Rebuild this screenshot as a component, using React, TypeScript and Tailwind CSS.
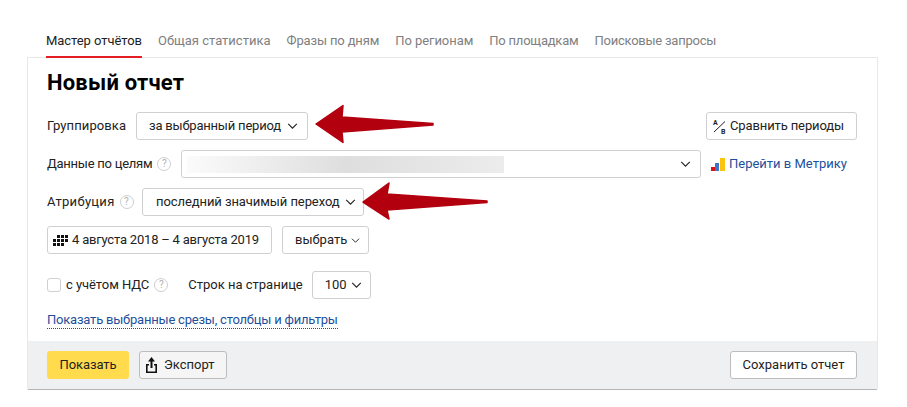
const Chevron = ({ className = "w-[11px] h-[6px]" }: { className?: string }) => (
  <svg viewBox="0 0 12 7" className={className} fill="none" stroke="#222" strokeWidth="1.3">
    <path d="M1 1l5 5 5-5" />
  </svg>
);

const Hint = () => (
  <span className="inline-flex items-center justify-center w-[14px] h-[14px] rounded-full border border-[#cfcfcf] text-[#b0b0b0] text-[10px] leading-none">
    ?
  </span>
);

const btn = "h-[28px] flex items-center rounded-[3px] border border-[#d0d0d0] bg-white text-[13px] text-[#222]";

const App = () => {
  return (
    <div className="relative w-[907px] h-[407px] bg-white overflow-hidden font-['Roboto',sans-serif] text-[13px] text-[#222]">
      <div className="flex gap-[16px] pl-[46px] pt-[31px] h-[57px]">
        <div className="h-[27px] border-b-2 border-[#e31f24] leading-[19px] tracking-[-0.05px]">Мастер отчётов</div>
        <div className="leading-[19px] text-[#808080]">Общая статистика</div>
        <div className="leading-[19px] text-[#808080] tracking-[-0.15px]">Фразы по дням</div>
        <div className="leading-[19px] text-[#808080] tracking-[-0.05px]">По регионам</div>
        <div className="leading-[19px] text-[#808080] tracking-[-0.22px]">По площадкам</div>
        <div className="leading-[19px] text-[#808080] tracking-[-0.24px]">Поисковые запросы</div>
      </div>

      <div className="mx-[27px] w-[851px] h-[333px] border border-[#e8e8e8] border-b-[#b5b5b5] rounded-b-[2px] flex flex-col">
        <div className="flex-1 px-[19px]">
          <h1 className="text-[22px] font-bold leading-[28px] text-black tracking-[0.2px] mt-[11px] mb-[15px]">Новый отчет</h1>

          <div className="flex items-center">
            <span className="w-[89px] tracking-[0.1px]">Группировка</span>
            <div className={`${btn} w-[172px] pl-[12px] gap-[6px] tracking-[-0.2px]`}>за выбранный период <Chevron /></div>
            <div className={`${btn} ml-auto mr-[1px] w-[151px] pl-[6px] gap-[3px] tracking-[-0.12px]`}>
              <svg viewBox="0 0 14 15" className="w-[14px] h-[15px]">
                <path d="M1 13L12 2.5" stroke="#222" strokeWidth="1" />
                <text x="0" y="6" fontSize="7" fontWeight="700" fill="#222">A</text>
                <text x="8" y="14.5" fontSize="7" fontWeight="700" fill="#222">B</text>
              </svg>
              Сравнить периоды
            </div>
          </div>

          <div className="flex items-center mt-[10px]">
            <span className="w-[134px] flex items-center gap-[5px] tracking-[-0.25px]">Данные по целям <Hint /></span>
            <div className={`${btn} w-[520px] pl-[5px] pr-[9px] justify-between`}>
              <div className="w-[317px] h-[17px] bg-gradient-to-r from-[#fbfbfb] via-[#dedede] to-[#ececec]" />
              <Chevron />
            </div>
            <div className="flex items-center ml-[10px] gap-[4px]">
              <svg viewBox="0 0 14 13" className="w-[14px] h-[13px]">
                <rect x="0" y="9" width="4" height="4" fill="#d8141b" />
                <rect x="4" y="5" width="4" height="8" fill="#3f75c4" />
                <rect x="9" y="0" width="5" height="13" fill="#fcc40f" />
              </svg>
              <span className="text-[#1d4f9c]">Перейти в Метрику</span>
            </div>
          </div>

          <div className="flex items-center mt-[10px]">
            <span className="w-[95px] flex items-center gap-[5px] tracking-[0.3px]">Атрибуция <Hint /></span>
            <div className={`${btn} w-[222px] pl-[13px] gap-[5px] tracking-[-0.08px]`}>последний значимый переход <Chevron /></div>
          </div>

          <div className="flex items-center mt-[10px] gap-[10px]">
            <div className={`${btn} w-[225px] pl-[5px] gap-[4px] tracking-[-0.2px]`}>
              <svg viewBox="0 0 15 11" className="w-[15px] h-[11px]" fill="#111">
                <path d="M4 0h3v3H4zM8 0h3v3H8zM12 0h3v3h-3zM0 4h3v3H0zM4 4h3v3H4zM8 4h3v3H8zM12 4h3v3h-3zM0 8h3v3H0zM4 8h3v3H4zM8 8h3v3H8z" />
              </svg>
              4 августа 2018 – 4 августа 2019
            </div>
            <div className={`${btn} w-[87px] pl-[12px] gap-[4px]`}>выбрать <Chevron className="w-[9px] h-[5px]" /></div>
          </div>

          <div className="flex items-center mt-[17px]">
            <div className="w-[14px] h-[14px] rounded-[3px] border border-[#d0d0d0]" />
            <span className="ml-[5px] flex items-center gap-[5px] tracking-[-0.05px]">с учётом НДС <Hint /></span>
            <span className="ml-[20px]">Строк на странице</span>
            <div className={`${btn} ml-[9px] w-[59px] pl-[12px] gap-[4px]`}>100 <Chevron /></div>
          </div>

          <div className="mt-[11px]">
            <span className="text-[#1d4f9c] leading-[17px] tracking-[-0.21px] inline-block border-b border-dotted border-[#1d4f9c]">
              Показать выбранные срезы, столбцы и фильтры
            </span>
          </div>
        </div>

        <div className="h-[48px] bg-[#eff0f2] px-[19px] flex items-center">
          <div className="h-[28px] w-[82px] flex items-center justify-center rounded-[3px] bg-[#ffdb4d] tracking-[-0.1px]">Показать</div>
          <div className={`${btn} ml-[10px] w-[88px] pl-[6px] gap-[7px] !bg-[#f5f5f5] !border-[#bdbdbd]`}>
            <svg viewBox="0 0 11 16" className="w-[11px] h-[16px]" fill="#111">
              <path d="M5.5 0l3.5 4.5H6.5V11h-2V4.5H2zM0 7h3v1.6H1.6v5.8h7.8V8.6H8V7h3v9H0z" />
            </svg>
            Экспорт
          </div>
          <div className={`${btn} ml-auto mr-[1px] w-[127px] justify-center !border-[#bdbdbd]`}>Сохранить отчет</div>
        </div>
      </div>

      {/* red arrows drawn on top of the form */}
      <svg className="absolute left-0 top-0 w-[907px] h-[407px] pointer-events-none" viewBox="0 0 907 407" fill="#b3000f" stroke="#b3000f" strokeWidth="1.5" strokeLinejoin="round">
        <path d="M316 124L343 105.5L342 117L433 123.5L433 125L342 132L343 142.5Z" />
        <path d="M363 202L389 183L387 194L487 201L487 202.5L387 210L389 219Z" />
      </svg>
    </div>
  );
};

export default App;
